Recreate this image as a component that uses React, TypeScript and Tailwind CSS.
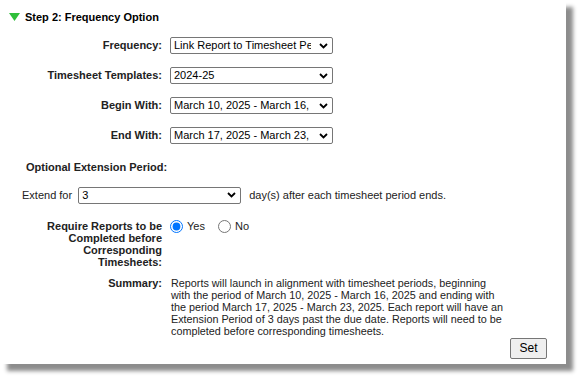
import React from "react";

const Chevron = () => (
  <svg
    className="pointer-events-none absolute right-[5px] top-1/2 -translate-y-1/2"
    width="9"
    height="6"
    viewBox="0 0 9 6"
  >
    <path d="M1 1 L4.5 4.5 L8 1" fill="none" stroke="#000" strokeWidth="1.8" />
  </svg>
);

const Select = ({ value, width }: { value: string; width: string }) => (
  <div className={`relative ${width}`}>
    <div className="h-[17px] w-full rounded-[2px] border border-[#767676] bg-white pl-[3px] text-[11px] leading-[15px] text-black">
      <div className="w-[calc(100%-21px)] overflow-hidden whitespace-nowrap">{value}</div>
    </div>
    <Chevron />
  </div>
);

const Row = ({ label, children }: { label: string; children: React.ReactNode }) => (
  <div className="flex items-center">
    <div className="w-[162px] text-right text-[11px] font-bold text-[#222]">{label}</div>
    <div className="ml-[8px]">{children}</div>
  </div>
);

export default function App() {
  return (
    <div className="h-[385px] w-[584px] bg-white font-['Liberation_Sans',Arial,sans-serif]">
      <div className="relative h-[364px] w-[566px] bg-white shadow-[7px_7px_4px_rgba(0,0,0,0.45)]">
        <div className="flex items-center pl-[9px] pt-[11px]">
          <svg width="11" height="8" viewBox="0 0 11 8">
            <path d="M0 0 H11 L5.5 8 Z" fill="#2fbf3a" />
          </svg>
          <span className="ml-[5px] text-[11px] font-bold leading-[12px] text-black">
            Step 2: Frequency Option
          </span>
        </div>

        <div className="mt-[14px] flex flex-col gap-[13px]">
          <Row label="Frequency:">
            <Select value="Link Report to Timesheet Periods" width="w-[163px]" />
          </Row>
          <Row label="Timesheet Templates:">
            <Select value="2024-25" width="w-[163px]" />
          </Row>
          <Row label="Begin With:">
            <Select value="March 10, 2025 - March 16, 2025" width="w-[163px]" />
          </Row>
          <Row label="End With:">
            <Select value="March 17, 2025 - March 23, 2025" width="w-[163px]" />
          </Row>
        </div>

        <div className="mt-[15px] pl-[26px] text-[11px] font-bold text-[#222]">
          Optional Extension Period:
        </div>

        <div className="mt-[11px] flex items-center pl-[22px] text-[11px] text-[#222]">
          <span>Extend for</span>
          <div className="ml-[6px]">
            <Select value="3" width="w-[163px]" />
          </div>
          <span className="ml-[8px]">day(s) after each timesheet period ends.</span>
        </div>

        <div className="mt-[16px] flex items-start">
          <div className="w-[162px] text-right text-[11px] font-bold leading-[12px] text-[#222]">
            Require Reports to be
            <br />
            Completed before
            <br />
            Corresponding
            <br />
            Timesheets:
          </div>
          <div className="ml-[8px] flex items-center text-[11px] leading-[12px] text-[#222]">
            <label className="flex items-center">
              <input type="radio" name="req" defaultChecked className="m-0 h-[13px] w-[13px]" />
              <span className="ml-[4px]">Yes</span>
            </label>
            <label className="ml-[13px] flex items-center">
              <input type="radio" name="req" className="m-0 h-[13px] w-[13px]" />
              <span className="ml-[4px]">No</span>
            </label>
          </div>
        </div>

        <div className="mt-[9px] flex items-start">
          <div className="w-[162px] text-right text-[11px] font-bold leading-[12px] text-[#222]">
            Summary:
          </div>
          <div className="ml-[9px] w-[334px] text-[10.8px] leading-[12px] text-[#222]">
            Reports will launch in alignment with timesheet periods, beginning with the period of
            March 10, 2025 - March 16, 2025 and ending with the period March 17, 2025 - March 23,
            2025. Each report will have an Extension Period of 3 days past the due date. Reports
            will need to be completed before corresponding timesheets.
          </div>
        </div>

        <div className="mt-[1px] flex justify-end pr-[19px]">
          <button className="h-[21px] w-[37px] rounded-[2px] border border-[#767676] bg-[#efefef] text-[12px] text-black">
            Set
          </button>
        </div>
      </div>
    </div>
  );
}
